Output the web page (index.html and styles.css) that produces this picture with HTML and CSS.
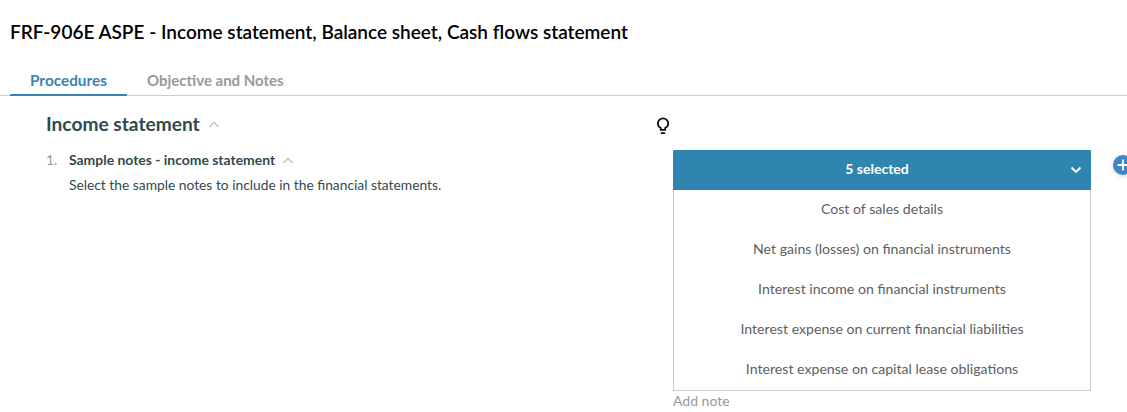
FILE: index.html
```html
<!DOCTYPE html>
<html lang="en">
<head>
<meta charset="utf-8">
<title>FRF-906E ASPE</title>
<link rel="stylesheet" href="styles.css">
</head>
<body>
<h1 class="title">FRF-906E ASPE - Income statement, Balance sheet, Cash flows statement</h1>
<nav class="tabs">
  <a class="tab active">Procedures</a>
  <a class="tab">Objective and Notes</a>
</nav>
<main class="content">
  <section class="left">
    <h2 class="section-title"><span>Income statement</span>
      <svg class="caret" width="12" height="8" viewBox="0 0 12 8"><path d="M1.500 7 6 2.500l4.500 4.500"/></svg>
    </h2>
    <div class="procedure">
      <span class="number">1.</span>
      <div class="procedure-body">
        <h3 class="procedure-title"><span>Sample notes - income statement</span>
          <svg class="caret" width="12" height="8" viewBox="0 0 12 8"><path d="M1.500 7 6 2.500l4.500 4.500"/></svg>
        </h3>
        <p class="procedure-text">Select the sample notes to include in the financial statements.</p>
      </div>
    </div>
  </section>
  <section class="right">
    <svg class="bulb" width="14" height="18" viewBox="0 0 14 18"><path d="M4.800 12.900V11C3 10 1.800 8.500 1.800 6.500a5.200 5.200 0 0 1 10.400 0c0 2-1.200 3.500-3 4.500v1.900zM4.800 16.200h4.400"/></svg>
    <div class="response">
      <div class="dropdown">
        <div class="selected"><span>5 selected</span>
          <svg class="chevron" width="12" height="8" viewBox="0 0 12 8"><path d="M1.500 1.500 6 6l4.500-4.500"/></svg>
        </div>
        <ul class="options">
          <li>Cost of sales details</li>
          <li>Net gains (losses) on financial instruments</li>
          <li>Interest income on financial instruments</li>
          <li>Interest expense on current financial liabilities</li>
          <li>Interest expense on capital lease obligations</li>
        </ul>
      </div>
      <div class="add-note">Add note</div>
    </div>
    <svg class="add" width="20" height="20" viewBox="0 0 20 20"><circle cx="10" cy="10" r="10"/><path d="M10 4.500v11M4.500 10h11"/></svg>
  </section>
</main>
</body>
</html>
```
FILE: styles.css
```css
* { box-sizing: border-box; margin: 0; padding: 0; }
body { height: 412px; overflow: hidden; background: #fff; font-family: Lato, sans-serif; font-size: 14px; color: #2f4a4f; }
.title { padding: 20px 0 0 10px; height: 66px; font-size: 19px; line-height: 24px; font-weight: 600; color: #000; white-space: nowrap; }
.tabs { display: flex; height: 30px; padding-left: 10px; border-bottom: 1px solid #ccc; }
.tab { height: 30px; padding: 0 20px; font-size: 15px; line-height: 29px; font-weight: 700; color: #999; }
.tab.active { width: 117px; font-size: 15.350px; color: #3b83b3; border-bottom: 2px solid #3b83b3; }
.content { display: flex; }
.left { width: 656px; padding: 16px 0 0 46px; }
.section-title { display: flex; align-items: center; gap: 8px; font-size: 19.150px; line-height: 24px; font-weight: 700; }
.caret, .chevron, .bulb { fill: none; stroke: #c8c8c8; stroke-width: 1.600; }
.procedure { display: flex; margin-top: 14px; }
.number { width: 23px; line-height: 20px; color: #a3938d; }
.procedure-title { display: flex; align-items: center; gap: 7px; font-size: 13.930px; line-height: 20px; }
.procedure-text { margin-top: 5px; font-size: 13.800px; line-height: 20px; }
.right { display: flex; width: 471px; padding-top: 21px; }
.bulb { flex: none; stroke: #111; stroke-width: 1.800; }
.response { flex: none; width: 418px; margin: 33px 0 0 3px; }
.selected { position: relative; height: 40px; background: #2e86b0; color: #fff; text-align: center; font-size: 14px; line-height: 37px; font-weight: 700; padding-right: 10px; border-radius: 1px 1px 0 0; }
.chevron { position: absolute; right: 9px; top: 16px; stroke: #fff; stroke-width: 1.800; }
.options { list-style: none; height: 201px; border: 1px solid #ccc; border-top: 0; text-align: center; color: #606060; font-size: 14.130px; }
.options li { height: 40px; line-height: 37px; }
.add-note { line-height: 20px; color: #999; }
.add { flex: none; overflow: visible; margin: 38px 0 0 22px; fill: #3f86c8; filter: drop-shadow(0 1px 2px #0003); }
.add path { stroke: #fff; stroke-width: 1.800; }
```
